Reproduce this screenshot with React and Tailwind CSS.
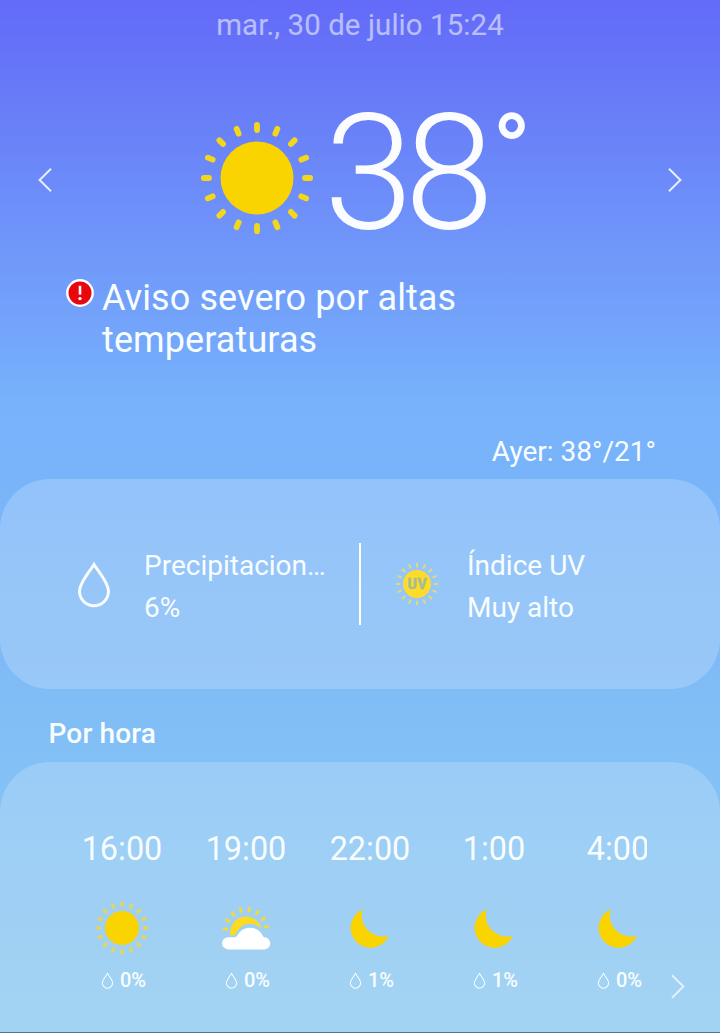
import { clsx } from 'clsx';

const RAYS = Array.from({ length: 16 }, (_, i) => i * 22.5);
const CLOUD_RAYS = [-87, -63, -39, -15, 9, 33, 57, 81];

const HOURS = [
    { time: '16:00', icon: 'sun', rain: '0%' },
    { time: '19:00', icon: 'cloud', rain: '0%' },
    { time: '22:00', icon: 'moon', rain: '1%' },
    { time: '1:00', icon: 'moon', rain: '1%' },
    { time: '4:00', icon: 'moon', rain: '0%' },
];

const BigSun = ({ className }) => (
    <svg viewBox="-57 -57 114 114" className={className}>
        <circle r="36.5" fill="#fad400" />
        {RAYS.map(angle => (
            <line key={angle} y1="-48" y2="-53.2" stroke="#f4d61c" strokeWidth="5.8" strokeLinecap="round" transform={`rotate(${angle})`} />
        ))}
    </svg>
);

const SmallSun = ({ className }) => (
    <svg viewBox="-27 -27 54 54" className={className}>
        <circle r="17" fill="#fad400" />
        {RAYS.map(angle => (
            <line key={angle} y1="-22.4" y2="-24.8" stroke="#e0d660" strokeWidth="3.3" strokeLinecap="round" transform={`rotate(${angle})`} />
        ))}
    </svg>
);

const UvSun = ({ className }) => (
    <svg viewBox="-22 -22 44 44" className={className}>
        <circle r="14" fill="#fddb2a" />
        {RAYS.map(angle => (
            <line key={angle} y1="-17.6" y2="-20.4" stroke="#e2da78" strokeWidth="2" strokeLinecap="round" transform={`rotate(${angle})`} />
        ))}
        <text x="0.4" y="5" textAnchor="middle" fill="#a6bd92" stroke="#a6bd92" strokeWidth="0.5" fontSize="14" fontWeight="800" letterSpacing="0.7" fontFamily="Roboto, sans-serif">UV</text>
    </svg>
);

const SunCloud = ({ className }) => (
    <svg viewBox="0 0 54 54" className={className}>
        {CLOUD_RAYS.map(angle => (
            <line key={angle} x1="27" x2="27" y1="6.9" y2="9.9" stroke="#f4da38" strokeWidth="2.8" strokeLinecap="round" transform={`rotate(${angle} 27 29)`} />
        ))}
        <path d="M11.3 33 A15.8 15.8 0 0 1 42.4 27.8 A15 15 0 0 0 17 33 Q16 35 11.6 34.4 Z" fill="#fddb20" />
        <path d="M9.2 36.2 H15.5 Q17.6 36.2 18.6 34 A14.2 14.2 0 0 1 43.4 34 Q44.2 36.2 45.4 36.2 A6.1 6.1 0 0 1 45 48.4 H9.2 A6.1 6.1 0 0 1 9.2 36.2 Z" fill="#fff" />
    </svg>
);

const Moon = ({ className }) => (
    <svg viewBox="0 0 54 54" className={className}>
        <path d="M19.6 8.4 A20 20 0 1 0 45.8 35 C31 38.6 14.8 25.4 19.6 8.4 Z" fill="#fad400" />
    </svg>
);

const Drop = ({ className, stroke }) => (
    <svg viewBox="0 0 36 48" className={className}>
        <path d="M18 4.5 C14.5 10.5 3.5 22.5 3.5 31.2 A14.5 14.5 0 0 0 32.5 31.2 C32.5 22.5 21.5 10.5 18 4.5 Z" fill="none" stroke="#f8fdff" strokeWidth={stroke} />
    </svg>
);

const Chevron = ({ className, flip }) => (
    <svg viewBox="0 0 14 24" className={clsx(className, flip && 'rotate-180')}>
        <path d="M1 0.8 L12.4 12 L1 23.2" fill="none" stroke="#e4efff" strokeWidth="2" />
    </svg>
);

const HourIcon = ({ icon }) => {
    const className = 'h-[54px] w-[54px]';
    if (icon === 'sun') return <SmallSun className={className} />;
    if (icon === 'cloud') return <SunCloud className={className} />;
    return <Moon className={className} />;
};

const App = () => (
    <div className="flex h-[1033px] w-[720px] flex-col overflow-hidden border-b border-[#4b7695] bg-[linear-gradient(180deg,#636af8_0px,#6981f8_130px,#7099fa_260px,#74a7fb_345px,#77b2fb_400px,#78b3fb_440px,#7eb9f6_640px,#82bff6_740px,#8cc9ef_1033px)] font-['Roboto',sans-serif] text-[#f8fdff]">
        <header className="h-[100px] pt-[5px] text-center text-[29.4px] leading-10 tracking-[0.1px] text-white/55">
            mar., 30 de julio 15:24
        </header>

        {/* Current temperature */}
        <div className="flex h-[160px] items-center px-[38px]">
            <Chevron flip className="h-[24px] w-[14px]" />
            <div className="flex flex-1 items-center pl-[148px]">
                <BigSun className="-mt-[5px] h-[114px] w-[114px] shrink-0" />
                <div className="-mt-[14px] flex pl-[10px] leading-[160px] whitespace-nowrap text-[#fbfcff]">
                    <span className="text-[161px] font-[330] tracking-[-8.7px]">38</span>
                    <span className="pl-[7px] text-[102px] leading-[117px] font-medium">°</span>
                </div>
            </div>
            <Chevron className="h-[24px] w-[14px]" />
        </div>

        {/* Severe weather warning */}
        <div className="flex h-[175px] gap-2 pt-[17px] pl-[66px]">
            <svg viewBox="0 0 28 28" className="mt-[2px] h-7 w-7">
                <circle cx="14" cy="14" r="12.7" fill="#e9060c" stroke="#fff" strokeWidth="2.4" />
                <path d="M14 6.8 V15.6" stroke="#fff" strokeWidth="2.6" />
                <circle cx="14" cy="19.6" r="1.7" fill="#fff" />
            </svg>
            <p className="w-[400px] text-[36px] leading-[42px] tracking-[0.1px]">Aviso severo por altas temperaturas</p>
        </div>

        <div className="h-[44px] pr-[64px] text-right text-[28px] leading-[34px]">Ayer: 38°/21°</div>

        <section className="flex h-[210px] items-center rounded-[50px] bg-white/20">
            <div className="flex w-[359px] items-center pl-[76px]">
                <Drop className="h-[48px] w-[36px]" stroke="3" />
                <div className="w-[200px] pt-[5px] pl-[32px] text-[28px] leading-[42px] whitespace-nowrap">
                    <div>Precipitacion…</div>
                    <div>6%</div>
                </div>
            </div>
            <div className="h-[82px] w-[2px] bg-white" />
            <div className="flex items-center pl-[34px]">
                <UvSun className="h-[44px] w-[44px]" />
                <div className="pt-[5px] pl-[28px] text-[28px] leading-[42px]">
                    <div>Índice UV</div>
                    <div>Muy alto</div>
                </div>
            </div>
        </section>

        <h2 className="h-[73px] pt-[28px] pl-[48.5px] text-[28px] leading-[34px] font-medium tracking-[0.15px]">Por hora</h2>

        <section className="flex flex-1 rounded-t-[50px] bg-white/20">
            <div className="ml-[60px] flex w-[587px] overflow-hidden pt-[67px]">
                {HOURS.map(({ time, icon, rain }) => (
                    <div key={time} className="flex w-[124px] shrink-0 flex-col items-center">
                        <div className="text-[32.4px] leading-10">{time}</div>
                        <div className="mt-[32px]"><HourIcon icon={icon} /></div>
                        <div className="mt-[11px] flex items-center gap-[6px] pl-[3px] text-[20px] leading-[28px] font-medium">
                            <Drop className="h-[17px] w-[13px]" stroke="3" />
                            {rain}
                        </div>
                    </div>
                ))}
            </div>
            <Chevron className="mt-[212px] ml-[24px] h-[25px] w-[14px]" />
        </section>
    </div>
);

export default App;
